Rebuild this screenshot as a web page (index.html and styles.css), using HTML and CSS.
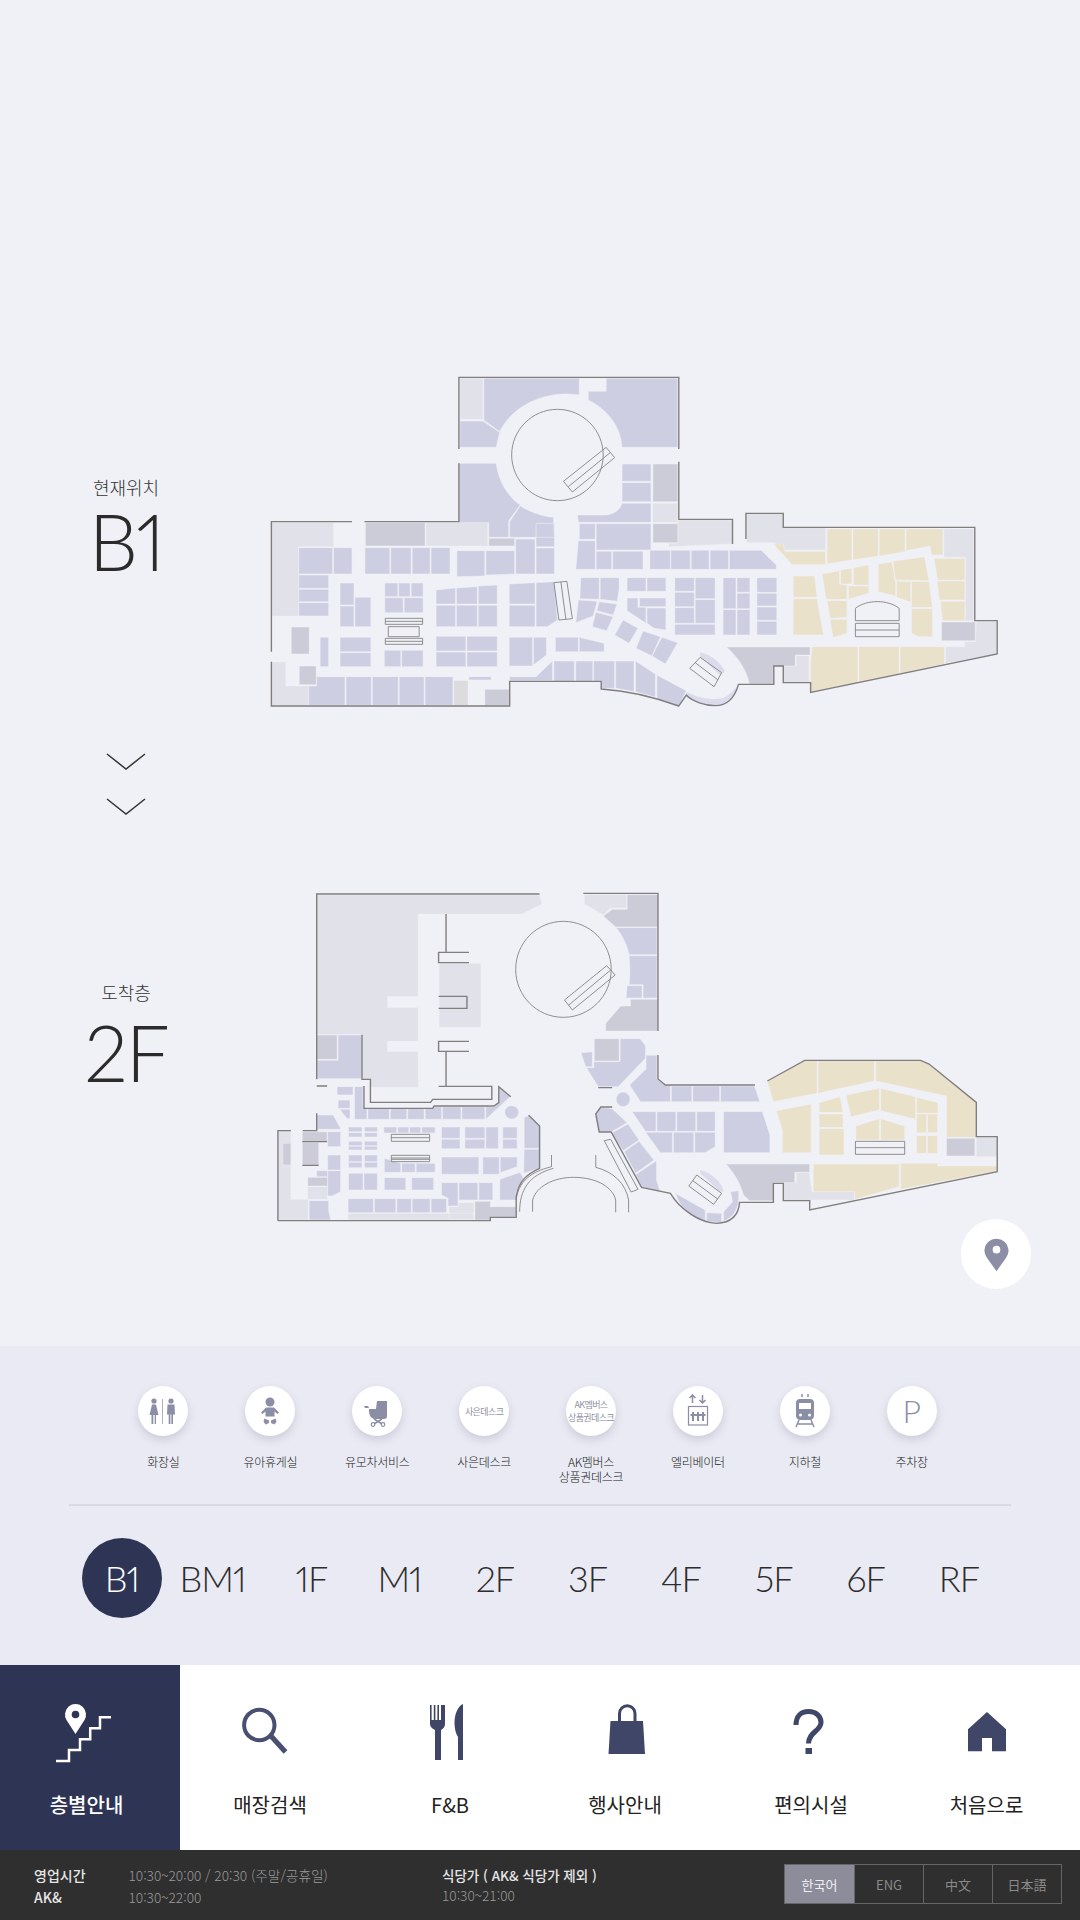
FILE: index.html
```html
<!DOCTYPE html>
<html lang="ko">
<head>
<meta charset="utf-8">
<title>층별안내</title>
<link rel="stylesheet" href="styles.css">
</head>
<body>
<main class="kiosk">
  <section class="route">
    <div class="floor-row">
      <div class="floor-label">
        <div class="floor-caption">현재위치</div>
        <div class="floor-name">B1</div>
      </div>
      <svg class="map map-b1" viewBox="0 0 1568 1080" preserveAspectRatio="none">
        <path class="lgrey" d="M422 55 468 55 468 178 422 178zM354 488 478 488 478 558 354 558zM810 430 860 430 860 487 810 487zM860 480 970 480 970 552 842 560 842 550 860 550zM998 460 1072 460 1072 504 1157 504 1157 570 1075 570 1052 548 998 548zM1395 507 1455 507 1455 782 1438 782 1438 592 1395 592zM1460 784 1501 784 1501 882 1398 910 1398 860 1437 860 1437 845 1458 845zM1098 887 1124 887 1124 968 1072 968 1072 918 1098 918zM44 488 168 488 168 560 98 560 98 768 44 768zM44 906 72 906 72 978 118 978 118 1037 44 1037z"/>
        <path class="grey" d="M232 488 352 488 352 558 232 558zM480 535 532 535 532 558 480 558zM810 312 860 312 860 425 810 425zM810 491 860 491 860 548 810 548zM1390 786 1458 786 1458 842 1390 842zM958 861 1126 861 1126 885 1096 885 1096 918 1052 918 1052 972 1004 972 1000 950C990 910 975 885 958 861zM83 801 119 801 119 882 83 882zM99 918 133 918 133 974 99 974zM472 988 521 988 521 1037 472 1037z"/>
        <path class="pale" d="M410 962 438 962 438 1036 410 1036z"/>
        <path class="soft" d="M878 995C900 1015 930 1020 950 1015 965 1005 975 985 982 975 975 1010 960 1035 935 1037 915 1037 890 1025 875 1010zM905 877C930 885 950 915 955 935L945 945 905 890z"/>
        <path class="shop" d="M470 55 662 55 662 105C600 90 530 130 502 215L470 180zM422 183 468 183 502 217 495 262 422 262zM716 55 860 55 860 262 748 262C745 200 720 150 680 120L680 94 716 94zM420 310 495 310C500 370 520 410 543 435L520 482 520 532 480 532 480 488 420 488zM543 437C560 455 590 470 610 472L612 532 522 532 522 485zM575 490 612 490 612 560 575 560zM658 465 716 465C735 462 745 445 748 430L806 430 806 487 660 487zM748 312 806 312 806 364 748 364zM748 368 806 368 806 425 748 425zM662 491 694 491 694 538 662 538zM696 491 806 491 806 570 696 570zM660 542 694 542 694 628 655 628zM696 574 727 574 727 628 696 628zM729 574 790 574 790 628 729 628zM804 571 845 571 845 628 804 628zM846 571 885 571 885 628 846 628zM887 571 923 571 923 628 887 628zM925 571 962 571 962 628 925 628zM964 571 1028 571 1058 615 1058 628 964 628zM98 563 166 563 166 642 98 642zM168 563 205 563 205 642 168 642zM98 645 158 645 158 685 98 685zM98 688 158 688 158 725 98 725zM98 728 158 728 158 768 98 768zM231 563 281 563 281 642 231 642zM283 563 324 563 324 642 283 642zM326 563 362 563 362 642 326 642zM364 563 402 563 402 642 364 642zM416 572 472 572 472 648 416 650zM474 572 532 572 532 642 474 645zM534 537 573 537 573 642 534 642zM575 564 612 564 612 642 575 642zM181 669 209 669 209 735 181 735zM181 738 209 738 209 800 181 800zM211 712 243 712 243 800 211 800zM271 669 297 669 297 710 271 710zM299 669 322 669 322 710 299 710zM324 669 348 669 348 710 324 710zM271 713 308 713 308 758 271 758zM310 713 348 713 348 758 310 758zM374 690 413 684 413 732 374 732zM415 684 457 680 457 732 415 732zM459 678 497 675 497 732 459 732zM374 736 413 736 413 800 374 800zM415 736 457 736 457 800 415 800zM459 736 497 736 497 800 459 800zM521 672 573 668 573 732 521 732zM521 736 573 736 573 800 521 800zM575 668 612 665 618 780 598 800 575 800zM665 653 702 653 702 718 663 716zM704 653 742 653 742 690 738 724 704 718zM660 720 698 724 690 768 655 788zM702 725 738 732 730 765 697 752zM695 757 730 770 717 812 688 800zM758 653 796 653 796 694 758 694zM798 653 836 653 836 694 798 694zM758 714 780 714 780 742 796 742 796 790 758 752zM783 714 836 714 836 740 783 740zM798 744 836 744 836 810 812 805 798 790zM854 653 893 653 893 694 854 694zM895 653 935 653 935 716 895 716zM854 697 893 697 893 740 854 740zM895 719 935 719 935 790 895 790zM854 743 893 743 893 790 854 790zM854 793 935 793 935 825 854 825zM951 653 977 653 977 746 951 746zM979 653 1005 653 1005 697 979 697zM979 700 1005 700 1005 746 979 746zM951 749 977 749 977 825 951 825zM979 749 1005 749 1005 825 979 825zM1019 653 1059 653 1059 697 1019 697zM1019 700 1059 700 1059 738 1019 738zM1019 741 1059 741 1059 781 1019 781zM1019 784 1059 784 1059 825 1019 825zM750 780 780 805 762 850 733 825zM790 813 825 830 808 888 776 865zM828 832 860 848 835 912 808 888zM141 832 158 832 158 920 141 920zM181 832 243 832 243 875 181 875zM181 878 243 878 243 920 181 920zM270 871 303 871 303 920 270 920zM305 871 348 871 348 920 305 920zM374 829 434 829 434 873 374 873zM436 829 497 829 497 873 436 873zM374 876 434 876 434 920 374 920zM436 876 497 876 497 920 436 920zM521 832 568 832 568 918 521 918zM570 832 596 832 596 885 570 915zM614 832 660 832 660 875 614 875zM662 832 712 850 712 875 662 875zM118 978 134 978 134 950 191 950 191 1036 118 1036zM193 950 244 950 244 1036 193 1036zM246 950 298 950 298 1036 246 1036zM300 950 350 950 350 1036 300 1036zM352 950 408 950 408 1036 352 1036zM440 950 485 950 485 960 440 960zM522 950 575 950 608 903 608 962 522 962zM611 903 652 903 652 964 611 964zM655 903 689 903 689 964 655 964zM691 903 733 903 733 985 706 985 706 964 691 964zM735 903 772 903 772 995 735 985zM775 903 815 942 815 1012 775 995zM818 945 877 992 862 1038 818 1015z"/>
        <path class="beige" d="M1052 552 1072 552 1075 574 1157 574 1157 614 1090 614zM1160 507 1210 507 1210 600 1160 612zM1212 507 1263 507 1263 588 1212 600zM1265 507 1317 507 1317 575 1265 588zM1319 507 1393 507 1393 585 1370 585 1367 558 1319 572zM1375 595 1437 595 1437 660 1382 660zM1381 663 1437 663 1437 720 1386 720zM1388 724 1437 724 1437 782 1392 782zM1130 860 1222 860 1222 968 1127 996 1127 905zM1224 860 1305 860 1305 942 1224 966zM1307 860 1396 860 1396 912 1307 940zM1092 648 1135 648 1140 712 1092 712zM1092 716 1140 716 1153 825 1092 825zM1150 642 1185 632 1185 672 1200 675 1200 718 1158 718zM1187 630 1210 625 1210 672 1187 672zM1213 623 1244 615 1244 675 1213 675zM1203 678 1244 678 1244 700 1203 718zM1160 722 1200 722 1200 772 1166 775zM1166 778 1200 778 1200 820 1172 833zM1263 612 1290 606 1298 660 1298 708 1263 695zM1293 604 1356 590 1365 662 1296 660zM1300 664 1328 664 1328 726 1300 712zM1330 664 1365 664 1372 742 1330 742zM1330 746 1372 746 1372 830 1345 830 1330 820z"/>
        <path class="thin" d="M618 148C567 148 526 210 526 285 526 360 567 422 618 422 669 422 710 360 710 285 710 210 669 148 618 148zM716 262 733 293 648 396 630 364zM724 278 640 380M272 775H347V793H272zM272 784H347M278 800H340V830H278zM272 835H347V853H272zM272 844H347M611 668 637 664 648 776 621 780zM625 666 635 778M905 892 948 938 933 980 884 925zM895 908 941 960M1217 782V745C1240 718 1282 718 1305 745V782zM1217 790H1305V830H1217zM1217 810H1305"/>
        <path class="wall" d="M420 267V52H862V267M862 305V478H970V552M997 537V460H1072V502H1457V782H1502V882L1127 997V968H1072V918H1053V973H982C975 1010 960 1037 935 1037 915 1037 890 1025 877 1005L862 1038C810 1010 760 992 706 987V964H522V1038H43V905M43 875V485H205M230 485H420V310"/>
      </svg>
    </div>
    <div class="direction">
      <svg class="chevron" viewBox="0 0 40 18"><path d="M1 1 20 16 39 1"/></svg>
      <svg class="chevron" viewBox="0 0 40 18"><path d="M1 1 20 16 39 1"/></svg>
    </div>
    <div class="floor-row floor-row-arrival">
      <div class="floor-label">
        <div class="floor-caption">도착층</div>
        <div class="floor-name">2F</div>
      </div>
      <svg class="map map-2f" viewBox="0 0 1568 1260" preserveAspectRatio="none">
        <path class="lgrey" d="M114 45 562 45 567 72 527 102 318 102 318 622 222 622 222 598 205 598 205 464 114 464zM360 250 444 250 444 442 360 442zM652 44 737 44 737 84 705 84 690 105 652 72zM36 752 62 752 62 958 97 958 97 1020 36 1020zM96 920 136 920 136 958 96 958zM177 1000 430 1000 430 1020 177 1020zM380 980 398 980 398 968 430 968 430 1018 380 1018zM1078 878 1104 878 1110 935 1195 935 1195 960 1105 960 1105 962 1052 962 1052 908 1078 908zM1440 771 1482 771 1482 830 1440 830z"/>
        <path class="grey" d="M114 465 155 465 155 538 114 538zM738 44 800 44 800 141 715 141 690 108 708 88 738 88zM725 378 745 378 745 358 800 358 800 453 695 453 695 430zM46 790 62 790 62 855 46 855zM85 755 135 755 135 785 85 785zM85 787 118 787 118 856 85 856zM96 892 136 892 136 918 96 918zM432 964 463 964 463 980 515 980 515 1012 463 1012 463 1020 432 1020zM672 476 722 476 722 543 672 543zM937 852 1105 852 1105 877 1075 877 1075 908 1032 908 1032 962 984 962 972 945C965 905 950 875 937 852zM1380 775 1437 775 1437 828 1380 828z"/>
        <path class="soft" d="M885 870C910 880 930 910 932 935L925 935 885 880z"/>
        <path class="bgfill" d="M256 349H318V383H256zM256 483H318V515H256z"/>
        <path class="shop" d="M157 465 204 465 204 596 114 596 114 541 157 541zM716 143 798 143 798 224 742 224C738 195 730 170 716 143zM742 227 798 227 798 354 770 354 770 314 742 314C744 290 744 260 742 227zM738 317 768 317 768 354 736 354zM190 620 207 620 207 686 215 686 215 718 190 718zM217 686 260 686 260 718 217 718zM262 686 295 686 295 718 262 718zM297 686 330 686 330 718 297 718zM332 686 347 686 350 680 365 680 365 718 332 718zM367 680 404 680 404 718 367 718zM406 680 452 680 452 718 406 718zM454 680 470 680 480 668 480 620 503 650 454 718zM155 620 187 620 187 645 155 645zM157 660 181 660 181 685 157 685zM160 688 181 688 181 716 175 716zM114 705 147 705 163 748 114 748zM136 755 162 755 162 800 136 800zM136 825 162 825 162 870 136 870zM114 872 136 872 136 890 114 890zM136 872 162 872 162 935 145 948 136 948zM99 962 138 962 138 990 142 1020 99 1020zM178 741 205 741 205 755 178 755zM210 741 236 741 236 755 210 755zM178 758 205 758 205 771 178 771zM210 758 236 758 236 771 210 771zM178 784 205 784 205 797 178 797zM210 784 236 784 236 797 210 797zM178 799 205 799 205 810 178 810zM210 799 236 799 236 810 210 810zM178 825 205 825 205 845 178 845zM210 825 236 825 236 845 210 845zM178 847 205 847 205 863 178 863zM210 847 236 847 236 863 210 863zM249 741 275 741 275 759 249 759zM277 741 299 741 299 759 277 759zM301 741 323 741 323 759 301 759zM325 741 352 741 352 759 325 759zM365 741 402 741 402 775 365 775zM365 778 402 778 402 806 365 806zM412 741 452 741 452 775 412 775zM412 778 452 778 452 806 412 806zM454 741 479 741 479 806 454 806zM488 741 517 741 517 775 488 775zM488 778 517 778 517 806 488 806zM250 835 283 850 283 877 250 877zM285 850 312 850 312 877 285 877zM314 850 352 850 352 877 314 877zM365 831 440 831 440 883 365 883zM448 831 481 831 481 883 448 883zM483 831 517 831 517 860 483 878zM178 880 207 880 207 930 178 930zM209 880 236 880 236 930 209 930zM250 893 293 893 293 930 250 930zM305 893 349 893 349 930 305 930zM365 908 398 908 398 978 378 978 378 955 365 945zM400 908 438 908 438 960 400 960zM440 908 468 908 468 960 440 960zM482 898 523 877 530 896 515 935 515 960 482 960zM177 956 228 956 228 998 177 998zM230 956 273 956 273 998 230 998zM275 956 304 956 304 998 275 998zM306 956 342 956 342 998 306 998zM344 956 375 956 375 998 344 998zM531 712 540 708 562 738 562 805 531 805zM531 808 562 808 562 865 530 880zM724 476 764 476 775 497 775 535 720 620 680 620 656 563 671 563 671 545 724 545zM645 518 668 515 668 560 655 560zM776 526 798 526 798 597 815 615 825 615 825 665 765 665 743 615 776 567zM827 618 868 618 868 665 827 665zM870 618 924 618 924 665 870 665zM926 618 994 618 1005 665 926 665zM748 695 796 695 796 754 775 754zM798 695 836 695 836 754 798 754zM838 695 876 695 876 754 838 754zM878 695 915 695 915 754 878 754zM775 757 829 757 829 818 805 818zM831 757 872 757 872 818 831 818zM874 757 915 757 915 800 895 818 874 818zM932 695 1010 695 1025 765 1025 818 932 818zM674 705 685 682 708 686 738 728 706 756 680 756zM706 760 740 732 762 780 730 812zM732 815 762 784 792 840 755 880zM755 884 797 842 797 900 805 935 768 922zM835 940 895 990 895 1025C870 1020 845 985 835 940zM898 998 928 1000 928 1028 898 1025zM932 995 950 965 946 935 962 932C965 980 955 1010 932 1024zM492 697A14 20 0 1 1 520 697 14 20 0 1 1 492 697zM716 658A14 22 0 1 1 744 658 14 22 0 1 1 716 658z"/>
        <path class="beige" d="M1020 605 1095 542 1120 542 1120 640 1032 665zM1122 542 1235 542 1235 603 1122 640zM1238 542 1330 542 1345 553 1440 667 1440 772 1380 772 1380 648 1238 603zM1038 692 1108 672 1108 818 1050 818 1050 750zM1124 668 1166 650 1172 697 1124 697zM1124 702 1172 702 1172 742 1124 742zM1124 746 1174 746 1174 825 1124 825zM1178 645 1245 625 1245 690 1188 710zM1248 625 1318 650 1318 718 1248 692zM1320 652 1363 668 1363 700 1320 700zM1320 702 1340 702 1340 758 1320 758zM1342 702 1362 702 1362 758 1342 758zM1320 767 1340 767 1340 820 1320 820zM1342 767 1362 767 1362 820 1342 820zM1198 738 1245 716 1245 780 1198 780zM1248 716 1296 738 1296 780 1248 780zM1112 852 1285 852 1285 920 1196 958 1196 935 1112 935zM1288 850 1362 850 1362 858 1482 858 1482 873 1288 928z"/>
        <path class="thin" d="M610 124C557 124 514 188 514 268 514 348 557 412 610 412 663 412 706 348 706 268 706 188 663 124 610 124zM697 257 714 285 628 390 612 360zM705 270 620 376M264 763H341V784H264zM264 773H341M264 826H341V845H264zM264 834H341M264 838H341M692 782 705 778 760 928 746 936zM878 885 928 940 912 973 862 918zM870 902 920 957M1197 784H1296V823H1197zM1197 803H1296M586 825V860C560 870 520 890 515 960M522 995C522 930 540 885 590 865M548 995V960C555 920 590 892 630 892 680 892 710 925 715 960V997M741 997V960C735 910 710 875 675 862V825"/>
        <path class="wall" d="M114 598V42H562M650 40H800V453M800 525V597L815 615H995M1020 603 1095 541H1328L1345 552 1440 667V770H1482V875L1105 990V962H1052V910H1032V967H964C962 1010 945 1028 918 1030 885 1028 845 990 825 940L767 922 706 756H682L675 702 685 681H708M680 623H708M374 102V216M420 217H359V248H420M359 349H416V385H359M420 484H359V514H420M374 515V618M359 619H466V658H347L343 667H222V598H205V464M209 618V685H347L350 678H470L480 668V620L504 650M36 1022H463V1012H515V950C520 900 540 880 562 865V738L540 706M36 1022V752H62M86 752H114V700M114 618H135M85 785H135M85 856H118"/>
      </svg>
      <button class="locate" type="button" aria-label="현재 위치">
        <svg viewBox="0 0 26 36"><path class="locate-pin" d="M13 35.500 3 21.500A12.500 12.500 0 1 1 23 21.500Z"/><circle class="locate-dot" cx="13" cy="13" r="4"/></svg>
      </button>
    </div>
  </section>

  <section class="panel">
    <ul class="facilities">
      <li class="facility">
        <span class="facility-icon">
          <svg viewBox="0 0 50 50"><g class="glyph"><circle cx="16" cy="15" r="2.600"/><path d="M14 18.500h4l2.500 10.500h-2.500v9h-1.300v-9h-1.400v9H13.500v-9H11.500z"/><circle cx="33" cy="15" r="2.600"/><path d="M29.500 18.500h7l.5 10h-2v9.500h-1.600v-9.500h-1v9.500h-1.700v-9.500h-1.700z"/></g><path class="glyph-line" d="M24.500 13V38"/></svg>
        </span>
        <span class="facility-name">화장실</span>
      </li>
      <li class="facility">
        <span class="facility-icon">
          <svg viewBox="0 0 50 50"><g class="glyph"><ellipse cx="25" cy="16" rx="4.500" ry="4.500"/><path d="M21 21.500h8l5 5-1.500 1.500-3-2.500v5h-9v-5l-3 2.500L16 26.500z"/><path d="M19.500 32.500 24 34.500v2.500l-3.500 1.500-2-3zM30.500 32.500 26 34.500v2.500l3.500 1.500 2-3z"/></g></svg>
        </span>
        <span class="facility-name">유아휴게실</span>
      </li>
      <li class="facility">
        <span class="facility-icon">
          <svg viewBox="0 0 50 50"><path class="glyph" d="M25 15h10v15c0 2-1 3-3 3H23c-3 0-6-3-6-8v-2h7zM12 20h4l1 2h-4z"/><path class="glyph-line glyph-wide" d="M22 33 30 38M30 33 22 38"/><circle class="glyph-ring" cx="21" cy="38.500" r="1.800"/><circle class="glyph-ring" cx="31" cy="38.500" r="1.800"/></svg>
        </span>
        <span class="facility-name">유모차서비스</span>
      </li>
      <li class="facility">
        <span class="facility-icon"><span class="badge-text">사은데스크</span></span>
        <span class="facility-name">사은데스크</span>
      </li>
      <li class="facility">
        <span class="facility-icon"><span class="badge-text">AK멤버스<br>상품권데스크</span></span>
        <span class="facility-name">AK멤버스<br>상품권데스크</span>
      </li>
      <li class="facility">
        <span class="facility-icon">
          <svg viewBox="0 0 50 50"><path class="glyph-line glyph-wide" d="M19.500 17V9M16.500 12l3-3 3 3M29.500 9v8M26.500 14l3 3 3-3"/><rect class="glyph-box" x="15.500" y="20.500" width="19" height="18.500"/><g class="glyph"><rect x="19" y="26" width="2" height="9"/><rect x="24" y="26" width="2" height="9"/><rect x="29" y="26" width="2" height="9"/><rect x="17.500" y="28" width="15" height="2"/></g></svg>
        </span>
        <span class="facility-name">엘리베이터</span>
      </li>
      <li class="facility">
        <span class="facility-icon">
          <svg viewBox="0 0 50 50"><path class="glyph" d="M20 13h10c3 0 4 2 4 4v13c0 2-2 4-4 4H20c-2 0-4-2-4-4V17c0-2 1-4 4-4z"/><rect class="glyph-cut" x="19" y="17" width="12" height="6"/><circle class="glyph-cut" cx="20.500" cy="29" r="1.500"/><circle class="glyph-cut" cx="29.500" cy="29" r="1.500"/><path class="glyph-line glyph-wide" d="M22 11V8M28 11V8M19 34 16 41M31 34 34 41M18 38H32"/></svg>
        </span>
        <span class="facility-name">지하철</span>
      </li>
      <li class="facility">
        <span class="facility-icon"><span class="badge-p">P</span></span>
        <span class="facility-name">주차장</span>
      </li>
    </ul>
    <ol class="floors">
      <li class="floor floor-active">B1</li>
      <li class="floor">BM1</li>
      <li class="floor">1F</li>
      <li class="floor">M1</li>
      <li class="floor">2F</li>
      <li class="floor">3F</li>
      <li class="floor">4F</li>
      <li class="floor">5F</li>
      <li class="floor">6F</li>
      <li class="floor">RF</li>
    </ol>
  </section>

  <nav class="nav">
    <a class="nav-item nav-active">
      <svg class="nav-icon" viewBox="0 0 80 80"><path class="nav-pin" d="M25.500 39 16.500 25A10.500 10.500 0 1 1 34.500 25Z"/><circle class="nav-pin-dot" cx="25.500" cy="19.500" r="3.800"/><path class="nav-stairs" d="M6 66H19V55H30V44.300H40.200V33.300H50V22.300H61"/></svg>
      <span>층별안내</span>
    </a>
    <a class="nav-item">
      <svg class="nav-icon" viewBox="0 0 80 80"><circle class="nav-stroke" cx="29.300" cy="30" r="15.200"/><path class="nav-stroke nav-stroke-bold" d="M41 41 55.500 57"/></svg>
      <span>매장검색</span>
    </a>
    <a class="nav-item">
      <svg class="nav-icon" viewBox="0 0 80 80"><path class="nav-fill" d="M20 10h1.600v15h2.200V10h1.600v15h2V10h1.600v15h2V10H35v19c0 3-2 5-4 6v30h-6V35c-2-1-5-3-5-6zM53 9v56h-5V42c-2-3-3.500-8-3.500-14C44.500 19 48 11 53 9z"/></svg>
      <span>F&amp;B</span>
    </a>
    <a class="nav-item">
      <svg class="nav-icon" viewBox="0 0 80 80"><path class="nav-stroke nav-stroke-handle" d="M29.500 26V18.500A7.700 7.700 0 0 1 45 18.500V26"/><path class="nav-fill" d="M20.500 26H53L55 59H18.500z"/></svg>
      <span>행사안내</span>
    </a>
    <a class="nav-item">
      <svg class="nav-icon" viewBox="0 0 80 80"><path class="nav-stroke nav-stroke-q" d="M26 30C26 21 31 16.500 38.500 16.500 46 16.500 51 21 51 27.500 51 36 38.500 37 38.500 48.500"/><rect class="nav-fill" x="35.500" y="53" width="6.500" height="6"/></svg>
      <span>편의시설</span>
    </a>
    <a class="nav-item">
      <svg class="nav-icon" viewBox="0 0 80 80"><path class="nav-fill" d="M37 17 56 34.300V56.300H42V43H32V56.300H18V34.300Z"/></svg>
      <span>처음으로</span>
    </a>
  </nav>

  <footer class="footer">
    <dl class="hours">
      <dt>영업시간</dt><dd>10:30~20:00 / 20:30 (주말/공휴일)</dd>
      <dt>AK&amp;</dt><dd>10:30~22:00</dd>
    </dl>
    <div class="food">
      <strong>식당가 ( AK&amp; 식당가 제외 )</strong>
      <span>10:30~21:00</span>
    </div>
    <ul class="langs">
      <li class="lang lang-active">한국어</li>
      <li class="lang">ENG</li>
      <li class="lang">中文</li>
      <li class="lang">日本語</li>
    </ul>
  </footer>
</main>
</body>
</html>
```
FILE: styles.css
```css
* { box-sizing: border-box; margin: 0; padding: 0; }
html, body { width: 1080px; height: 1920px; overflow: hidden; }
body { font-family: "Noto Sans CJK KR", "Noto Sans", sans-serif; background: #f0f1f6; color: #333; }
ul, ol { list-style: none; }
svg { display: block; }

.kiosk { display: flex; flex-direction: column; width: 1080px; height: 1920px; }

.route { position: relative; height: 1346px; padding-top: 360px; background: #f0f1f6; }
.floor-row { display: flex; }
.floor-row-arrival { gap: 10px; }
.floor-label { width: 250px; flex: none; display: flex; flex-direction: column; align-items: center; padding-left: 2px; padding-top: 114px; }
.floor-row-arrival .floor-label { padding-top: 99px; }
.floor-caption { font-size: 18px; line-height: 26px; color: #333; font-weight: 300; }
.floor-name { font-family: "Lato", sans-serif; font-weight: 300; font-size: 78px; line-height: 60px; margin-top: 11px; color: #2b2b2b; letter-spacing: -2px; font-variant-numeric: proportional-nums; }
.floor-row-arrival .floor-name { margin-top: 17px; }

.map { flex: none; width: 780px; }
.map-b1 { height: 360px; }
.map-2f { height: 420px; }
.map path { vector-effect: non-scaling-stroke; }
.shop { fill: #cecee3; stroke: #f0f1f6; stroke-width: .5; }
.grey { fill: #cccbd8; stroke: #f0f1f6; stroke-width: .5; }
.lgrey { fill: #e0e1e9; stroke: #f0f1f6; stroke-width: .5; }
.pale { fill: #dcdcdf; }
.soft { fill: #dcdbec; }
.beige { fill: #eae1cb; stroke: #f0f1f6; stroke-width: .5; }
.bgfill { fill: #f0f1f6; }
.thin { fill: none; stroke: #858386; stroke-width: .9; }
.wall { fill: none; stroke: #817e7e; stroke-width: 1.400; }

.direction { display: flex; flex-direction: column; align-items: center; gap: 27px; width: 252px; height: 160px; padding-top: 33px; }
.chevron { width: 40px; height: 18px; }
.chevron path { fill: none; stroke: #333; stroke-width: 1.500; }

.locate { position: absolute; left: 961px; top: 1219px; width: 70px; height: 70px; border: 0; border-radius: 50%; background: #fff; display: flex; align-items: center; justify-content: center; }
.locate svg { width: 25px; height: 35px; }
.locate-pin { fill: #8c8ea5; }
.locate-dot { fill: #fff; }

.panel { height: 319px; background: #e9eaf3; }
.facilities { display: grid; grid-template-columns: repeat(8, 106.900px); height: 160px; margin: 0 69px; padding: 40px 0 0 41px; border-bottom: 2px solid #d8d9e1; }
.facility { display: flex; flex-direction: column; align-items: center; text-align: center; }
.facility-icon { width: 50px; height: 50px; border-radius: 50%; background: #fff; box-shadow: 0 4px 8px rgba(90, 92, 120, .2); display: flex; align-items: center; justify-content: center; }
.facility-icon svg { width: 50px; height: 50px; }
.facility-name { margin-top: 18px; font-size: 12px; line-height: 15px; font-weight: 300; color: #222; letter-spacing: -.3px; }
.badge-text { font-size: 9px; line-height: 13px; color: #8e8fa1; letter-spacing: -.6px; white-space: nowrap; text-align: center; }
.badge-p { font-family: "Lato", sans-serif; font-weight: 300; font-size: 32px; line-height: 32px; color: #8c8ea5; }
.glyph { fill: #8c8ea5; }
.glyph-line { fill: none; stroke: #8c8ea5; stroke-width: .7; }
.glyph-wide { stroke-width: 1.500; }
.glyph-ring { fill: #fff; stroke: #8c8ea5; stroke-width: 1.200; }
.glyph-box { fill: none; stroke: #8c8ea5; stroke-width: 1.200; }
.glyph-cut { fill: #fff; }

.floors { display: flex; align-items: center; gap: 54px; height: 80px; margin-top: 32px; padding-left: 82px; }
.floor { font-family: "Lato", sans-serif; font-weight: 300; font-size: 36px; line-height: 80px; color: #2d2d2d; letter-spacing: -1px; font-variant-numeric: proportional-nums; }
.floor-active { width: 80px; height: 80px; margin-right: -36.500px; border-radius: 50%; background: #2e3554; color: #fff; text-align: center; }
.floor:nth-child(2), .floor:nth-child(3) { margin-right: -4px; }

.nav { display: flex; height: 185px; background: #fff; }
.nav-item { flex: 1 1 0; display: flex; flex-direction: column; align-items: center; padding-top: 30px; font-size: 20px; line-height: 30px; color: #222; }
.nav-item span { margin-top: 15px; }
.nav-item:nth-child(1) span, .nav-item:nth-child(6) span { margin-right: 7px; }
.nav-item:nth-child(4) span { margin-right: 10px; }
.nav-item:nth-child(5) span { margin-left: 2px; }
.nav-active { background: #2e3554; color: #fff; font-weight: 500; }
.nav-icon { width: 80px; height: 80px; }
.nav-fill { fill: #3f4668; }
.nav-stroke { fill: none; stroke: #484f70; stroke-width: 4; }
.nav-stroke-bold { stroke-width: 5; }
.nav-stroke-handle { stroke: #3f4668; stroke-width: 3; }
.nav-stroke-q { stroke: #3f4668; stroke-width: 5; }
.nav-pin { fill: #fff; }
.nav-pin-dot { fill: #2e3554; }
.nav-stairs { fill: none; stroke: #fff; stroke-width: 2.500; }

.footer { display: flex; height: 70px; background: #2f2f2f; font-size: 13.700px; font-weight: 300; color: #9a9a9a; }
.hours { display: grid; grid-template-columns: 94.500px 1fr; width: 442px; padding: 14px 0 0 34px; line-height: 22px; align-content: start; }
.hours dt { color: #e6e6e6; font-weight: 500; font-size: 14px; }
.food { display: flex; flex-direction: column; padding-top: 15px; line-height: 20px; }
.food strong { color: #e6e6e6; font-weight: 500; font-size: 13.500px; }
.langs { display: flex; margin: 14px 18px 0 auto; height: 40px; border: 1px solid #666; font-weight: 400; color: #8a8a8a; }
.lang { width: 69px; display: flex; align-items: center; justify-content: center; font-size: 13px; border-left: 1px solid #666; }
.lang:first-child { border-left: 0; }
.lang-active { background: #8c8c9b; color: #f0f0f0; }
```
